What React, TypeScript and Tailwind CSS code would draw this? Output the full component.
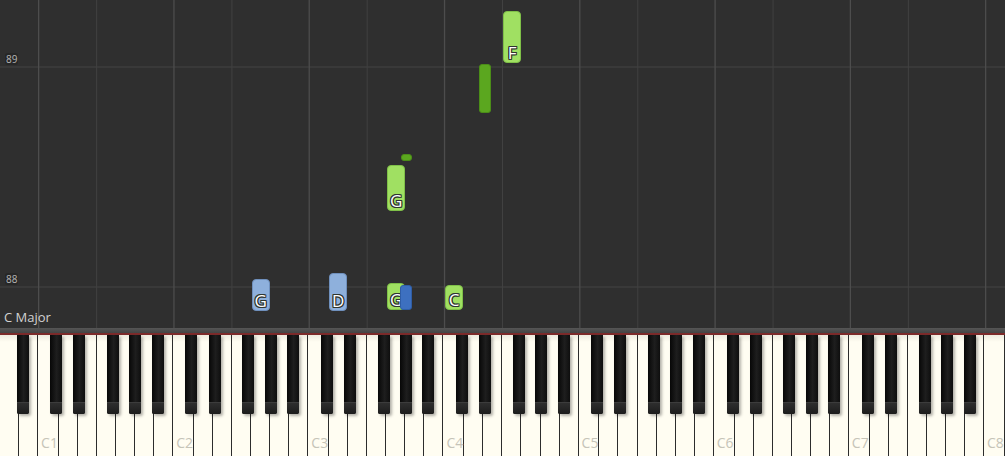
import React from "react";

const W = 1005 / 52;
const LETTERS = ["A", "B", "C", "D", "E", "F", "G"];
const BLACK_OFFSET: Record<string, number> = { A: 3.2, C: -1.8, D: 2, F: -3, G: 0 };

type Note = {
  left: number;
  top: number;
  w: number;
  h: number;
  kind: "lb" | "lg" | "dg" | "db";
  label?: string;
};

const NOTES: Note[] = [
  { left: 251.5, top: 279, w: 18.6, h: 32, kind: "lb", label: "G" },
  { left: 328.8, top: 273, w: 18.6, h: 38, kind: "lb", label: "D" },
  { left: 386.8, top: 283, w: 18.6, h: 27, kind: "lg", label: "G" },
  { left: 444.8, top: 285, w: 18.6, h: 25, kind: "lg", label: "C" },
  { left: 400.2, top: 285, w: 11.8, h: 25, kind: "db" },
  { left: 386.8, top: 165, w: 18.6, h: 46, kind: "lg", label: "G" },
  { left: 400.5, top: 154, w: 11.5, h: 7, kind: "dg" },
  { left: 479.3, top: 64, w: 11.8, h: 49, kind: "dg" },
  { left: 502.8, top: 11, w: 18.6, h: 52, kind: "lg", label: "F" },
];

const KIND_CLASS: Record<Note["kind"], string> = {
  lb: "bg-[#8eb0dc] border border-[#6f90bd] rounded-[4px]",
  lg: "bg-[#a0e062] border border-[#7fc048] rounded-[4px]",
  dg: "bg-[#5ba71f] border border-[#4b8d18] rounded-[3px]",
  db: "bg-[#3d70c0] border border-[#2f5da5] rounded-[3px]",
};

function Grid() {
  const lines: React.ReactNode[] = [];
  for (let k = 0; k < 8; k++) {
    const cx = (2 + 7 * k) * W;
    const fx = (5 + 7 * k) * W;
    lines.push(<line key={"c" + k} x1={cx} y1={0} x2={cx} y2={328} stroke="#4d4d4d" strokeWidth={1.3} />);
    if (fx < 1005) lines.push(<line key={"f" + k} x1={fx} y1={0} x2={fx} y2={328} stroke="#414141" strokeWidth={1} />);
  }
  return (
    <svg className="absolute inset-0" width={1005} height={328}>
      <line x1={0} y1={67} x2={1005} y2={67} stroke="#444444" strokeWidth={1} />
      <line x1={0} y1={287} x2={1005} y2={287} stroke="#444444" strokeWidth={1} />
      {lines}
    </svg>
  );
}

function Roll() {
  return (
    <div className="relative h-[328px] w-full overflow-hidden bg-[#2f2f2f]">
      <Grid />
      <div className="absolute left-[5px] top-[53px] rounded-[3px] bg-[#272727] px-[1px] text-[10px] leading-[12px] text-[#b0b0b0] font-['Noto_Sans',sans-serif]">
        89
      </div>
      <div className="absolute left-[5px] top-[273px] rounded-[3px] bg-[#272727] px-[1px] text-[10px] leading-[12px] text-[#b0b0b0] font-['Noto_Sans',sans-serif]">
        88
      </div>
      {NOTES.map((n, i) => (
        <div
          key={i}
          className={"absolute box-border flex items-end justify-center overflow-hidden " + KIND_CLASS[n.kind]}
          style={{ left: n.left, top: n.top, width: n.w, height: n.h }}
        >
          {n.label && (
            <span className="pb-[1px] text-[17px] leading-none text-white font-['Open_Sans',sans-serif] [text-shadow:-1px_-1px_0_#2e3530,1px_-1px_0_#2e3530,-1px_1px_0_#2e3530,1px_1px_0_#2e3530,0_1px_0_#2e3530,0_-1px_0_#2e3530,1px_0_0_#2e3530,-1px_0_0_#2e3530]">
              {n.label}
            </span>
          )}
        </div>
      ))}
      <div className="absolute bottom-[3px] left-[4px] text-[13px] leading-[16px] text-[#d2d2d2] font-['Open_Sans',sans-serif]">
        C Major
      </div>
    </div>
  );
}

function Keyboard() {
  const whites = Array.from({ length: 52 }, (_, i) => {
    const letter = LETTERS[i % 7];
    const octave = i < 2 ? 0 : Math.floor((i - 2) / 7) + 1;
    return { letter, octave, i };
  });
  const blacks: { left: number; key: string }[] = [];
  whites.forEach((wk) => {
    if (wk.i >= 51) return;
    const off = BLACK_OFFSET[wk.letter];
    if (off === undefined) return;
    blacks.push({ left: (wk.i + 1) * W + off - 6, key: wk.letter + wk.octave });
  });
  return (
    <div className="relative flex h-[121px] w-full">
      {whites.map((wk) => (
        <div
          key={wk.i}
          className="relative flex flex-1 items-end border-r border-[#2c2c2c] bg-[linear-gradient(#eeebdf,#fffdf2_7px,#fffdf2)] pb-[6px] pl-[3px]"
        >
          {wk.letter === "C" && (
            <span className="text-[14px] leading-[14px] text-[#c6c4b8] font-['Open_Sans',sans-serif]">
              C{wk.octave}
            </span>
          )}
        </div>
      ))}
      {blacks.map((b) => (
        <div
          key={b.key}
          className="absolute top-0 flex h-[79px] w-[12px] flex-col justify-end rounded-b-[2px] bg-[linear-gradient(90deg,#070707,#1e1e1e_55%,#0e0e0e)] shadow-[2px_2px_3px_rgba(0,0,0,0.3)]"
          style={{ left: b.left }}
        >
          <div className="h-[12px] rounded-b-[2px] border-t border-[#3c3c3c] bg-[linear-gradient(#2e2e2e,#1c1c1c)]" />
        </div>
      ))}
    </div>
  );
}

export default function App() {
  return (
    <div className="flex h-[456px] w-[1005px] flex-col overflow-hidden bg-[#2f2f2f]">
      <Roll />
      <div className="h-[5px] bg-[linear-gradient(#555555,#444444)]" />
      <div className="h-[2px] bg-[#7c2a2a]" />
      <Keyboard />
    </div>
  );
}
